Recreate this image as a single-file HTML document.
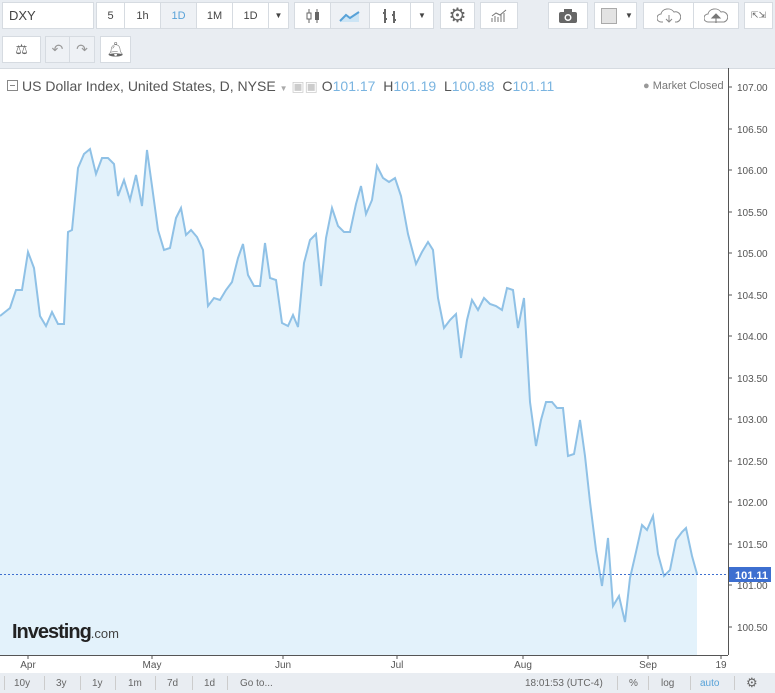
<!DOCTYPE html>
<html><head><meta charset="utf-8"><style>
*{box-sizing:border-box;margin:0;padding:0}
body{width:775px;height:693px;background:#e9edf2;font-family:"Liberation Sans",sans-serif;position:relative;overflow:hidden;color:#555}
.b{position:absolute;background:#fff;border:1px solid #d6dbe1;font-size:11px;display:flex;align-items:center;justify-content:center;color:#444}
.t{position:absolute;font-size:11px;color:#444}
</style></head><body>
<div class="b" style="left:2px;top:2px;width:92px;height:27px;justify-content:flex-start;padding-left:6px;font-size:13px">DXY</div>
<div class="b" style="left:96px;top:2px;width:29px;height:27px">5</div>
<div class="b" style="left:124px;top:2px;width:37px;height:27px">1h</div>
<div class="b" style="left:160px;top:2px;width:37px;height:27px;background:#eef1f5;color:#58a2d8">1D</div>
<div class="b" style="left:196px;top:2px;width:37px;height:27px">1M</div>
<div class="b" style="left:232px;top:2px;width:37px;height:27px">1D</div>
<div class="b" style="left:268px;top:2px;width:21px;height:27px;font-size:8px">▼</div>
<div class="b" style="left:294px;top:2px;width:37px;height:27px"><svg width="16" height="18"><path d="M4 2v14M12 2v14" stroke="#666"/><rect x="2" y="6" width="4" height="6" fill="#fff" stroke="#666"/><rect x="10" y="5" width="4" height="8" fill="#666"/></svg></div>
<div class="b" style="left:330px;top:2px;width:40px;height:27px;background:#eef1f5"><svg width="22" height="14"><path d="M1 12L7 6L11 9L20 3V13H1Z" fill="#cde5f5"/><path d="M1 12L7 6L11 9L20 3" stroke="#58a2d8" stroke-width="2" fill="none"/></svg></div>
<div class="b" style="left:369px;top:2px;width:42px;height:27px"><svg width="20" height="18"><path d="M5 2v14M3 6h2M5 12h2M14 4v12M12 8h2M14 13h2" stroke="#666" stroke-width="2"/></svg></div>
<div class="b" style="left:410px;top:2px;width:24px;height:27px;font-size:8px">▼</div>
<div class="b" style="left:440px;top:2px;width:35px;height:27px;font-size:20px;color:#666">⚙</div>
<div class="b" style="left:480px;top:2px;width:38px;height:27px"><svg width="18" height="14"><path d="M2 13V9M5 13V7M8 13V8M11 13V5M14 13V4M2 7L6 4L10 6L16 1" stroke="#777" fill="none"/></svg></div>
<div class="b" style="left:548px;top:2px;width:40px;height:27px"><svg width="20" height="16"><rect x="1" y="4" width="18" height="11" rx="2" fill="#666"/><rect x="6" y="1" width="8" height="4" fill="#666"/><circle cx="10" cy="9.5" r="3.5" fill="#fff"/><circle cx="10" cy="9.5" r="2" fill="#666"/></svg></div>
<div class="b" style="left:594px;top:2px;width:43px;height:27px;justify-content:flex-start;padding-left:6px"><span style="display:inline-block;width:16px;height:16px;background:#e3e3e3;border:1px solid #aaa"></span><span style="font-size:8px;margin-left:8px">▼</span></div>
<div class="b" style="left:643px;top:2px;width:51px;height:27px"><svg width="24" height="16"><path d="M6 14H4a4 4 0 0 1 0-8a7 6 0 0 1 13-2a5 5 0 0 1 3 10h-2" fill="none" stroke="#888"/><path d="M12 7v7M9 11l3 3 3-3" fill="none" stroke="#888"/></svg></div>
<div class="b" style="left:693px;top:2px;width:46px;height:27px"><svg width="24" height="16"><path d="M4 14a4 4 0 0 1 0-8a7 6 0 0 1 13-2a5 5 0 0 1 3 10Z" fill="none" stroke="#888"/><path d="M12 15V9M8 10l4-4 4 4Z" fill="#777" stroke="#777"/></svg></div>
<div class="b" style="left:744px;top:2px;width:29px;height:27px;font-size:9px;color:#666;line-height:9px;text-align:center">⇱⇲</div>
<div class="b" style="left:2px;top:36px;width:39px;height:27px;font-size:14px;color:#666">⚖</div>
<div class="b" style="left:45px;top:36px;width:25px;height:27px;background:#eef1f5;color:#999;font-size:14px">↶</div>
<div class="b" style="left:69px;top:36px;width:26px;height:27px;background:#eef1f5;color:#999;font-size:14px">↷</div>
<div class="b" style="left:100px;top:36px;width:31px;height:27px;color:#666;font-size:14px">🔔︎</div>

<div style="position:absolute;left:0;top:68px;width:775px;height:605px;background:#fff;border-top:1px solid #d6dbe1"></div>
<svg style="position:absolute;left:0;top:0" width="775" height="693">
<polygon fill="#e3f2fb" points="0,655 0,316 10,308 16,290 22,290 28,252 34,268 40,316 46,326 52,312 58,324 64,324 68,232 72,230 78,168 84,154 90,149 96,174 102,158 108,158 114,164 118,196 124,180 130,200 136,175 142,206 147,150 152,186 158,230 164,250 170,248 176,218 181,208 186,235 191,230 197,237 203,250 208,306 214,298 220,300 226,290 232,282 238,258 243,244 248,275 254,286 260,286 265,243 270,278 276,280 282,323 288,326 293,315 298,327 304,263 310,240 316,234 321,286 326,238 332,208 338,226 344,232 350,232 356,204 361,186 366,214 372,200 377,166 383,178 389,182 395,178 401,196 408,234 416,264 422,252 428,242 433,250 438,298 444,328 450,320 456,314 461,358 467,320 472,300 478,310 484,298 490,304 496,306 502,310 507,288 513,290 518,328 524,298 530,402 536,446 541,420 546,402 552,402 557,408 563,408 568,456 574,454 580,420 585,456 590,502 596,550 602,586 608,538 613,606 619,596 625,622 630,578 636,552 642,525 647,530 653,516 658,554 664,576 670,570 676,540 682,532 686,528 692,556 697,574 697,655"/>
<polyline fill="none" stroke="#8fc1e6" stroke-width="2" points="0,316 10,308 16,290 22,290 28,252 34,268 40,316 46,326 52,312 58,324 64,324 68,232 72,230 78,168 84,154 90,149 96,174 102,158 108,158 114,164 118,196 124,180 130,200 136,175 142,206 147,150 152,186 158,230 164,250 170,248 176,218 181,208 186,235 191,230 197,237 203,250 208,306 214,298 220,300 226,290 232,282 238,258 243,244 248,275 254,286 260,286 265,243 270,278 276,280 282,323 288,326 293,315 298,327 304,263 310,240 316,234 321,286 326,238 332,208 338,226 344,232 350,232 356,204 361,186 366,214 372,200 377,166 383,178 389,182 395,178 401,196 408,234 416,264 422,252 428,242 433,250 438,298 444,328 450,320 456,314 461,358 467,320 472,300 478,310 484,298 490,304 496,306 502,310 507,288 513,290 518,328 524,298 530,402 536,446 541,420 546,402 552,402 557,408 563,408 568,456 574,454 580,420 585,456 590,502 596,550 602,586 608,538 613,606 619,596 625,622 630,578 636,552 642,525 647,530 653,516 658,554 664,576 670,570 676,540 682,532 686,528 692,556 697,574"/>
<line x1="0" y1="574.5" x2="728" y2="574.5" stroke="#3d6fd0" stroke-dasharray="2,2"/>
<line x1="728.5" y1="68" x2="728.5" y2="655" stroke="#555"/>
<line x1="0" y1="655.5" x2="728" y2="655.5" stroke="#555"/>
<g stroke="#555">
<line x1="728" y1="87" x2="732" y2="87"/><line x1="728" y1="129" x2="732" y2="129"/><line x1="728" y1="170" x2="732" y2="170"/><line x1="728" y1="212" x2="732" y2="212"/><line x1="728" y1="253" x2="732" y2="253"/><line x1="728" y1="295" x2="732" y2="295"/><line x1="728" y1="336" x2="732" y2="336"/><line x1="728" y1="378" x2="732" y2="378"/><line x1="728" y1="419" x2="732" y2="419"/><line x1="728" y1="461" x2="732" y2="461"/><line x1="728" y1="502" x2="732" y2="502"/><line x1="728" y1="544" x2="732" y2="544"/><line x1="728" y1="585" x2="732" y2="585"/><line x1="728" y1="627" x2="732" y2="627"/>
<line x1="28" y1="655" x2="28" y2="659"/><line x1="152" y1="655" x2="152" y2="659"/><line x1="283" y1="655" x2="283" y2="659"/><line x1="397" y1="655" x2="397" y2="659"/><line x1="523" y1="655" x2="523" y2="659"/><line x1="648" y1="655" x2="648" y2="659"/><line x1="721" y1="655" x2="721" y2="659"/>
</g>
<g font-family="Liberation Sans" font-size="10" fill="#555">
<text x="737" y="91">107.00</text><text x="737" y="133">106.50</text><text x="737" y="174">106.00</text><text x="737" y="216">105.50</text><text x="737" y="257">105.00</text><text x="737" y="299">104.50</text><text x="737" y="340">104.00</text><text x="737" y="382">103.50</text><text x="737" y="423">103.00</text><text x="737" y="465">102.50</text><text x="737" y="506">102.00</text><text x="737" y="548">101.50</text><text x="737" y="589">101.00</text><text x="737" y="631">100.50</text>
<g text-anchor="middle"><text x="28" y="668">Apr</text><text x="152" y="668">May</text><text x="283" y="668">Jun</text><text x="397" y="668">Jul</text><text x="523" y="668">Aug</text><text x="648" y="668">Sep</text><text x="721" y="668">19</text></g>
</g>
<rect x="729" y="567" width="42" height="15" fill="#3d6fd0"/>
<text x="735" y="579" font-family="Liberation Sans" font-size="11" font-weight="bold" fill="#fff">101.11</text>
</svg>
<div class="t" style="left:7px;top:78px;font-size:14px;color:#555"><span style="display:inline-block;width:11px;height:11px;border:1px solid #888;vertical-align:0px;margin-right:4px;position:relative"><span style="position:absolute;left:2px;top:4px;width:5px;height:1px;background:#888"></span></span>US Dollar Index, United States, D, NYSE <span style="font-size:8px;color:#aaa">▼</span> <span style="color:#ccc">▣▣</span> <span style="font-size:14px">O<span style="color:#7ab4e0">101.17</span> &nbsp;H<span style="color:#7ab4e0">101.19</span> &nbsp;L<span style="color:#7ab4e0">100.88</span> &nbsp;C<span style="color:#7ab4e0">101.11</span></span></div>
<div class="t" style="left:643px;top:80px;color:#777"><span style="color:#999">●</span> Market Closed</div>
<div class="t" style="left:12px;top:621px;font-size:20px;font-weight:bold;color:#222;letter-spacing:-1px">Investing<span style="font-size:13px;font-weight:normal;color:#444;letter-spacing:0">.com</span></div>
<div style="position:absolute;left:0;top:673px;width:775px;height:20px;background:#e9edf2;font-size:10px;color:#666">
<span style="position:absolute;left:14px;top:5px">10y</span><span style="position:absolute;left:56px;top:5px">3y</span><span style="position:absolute;left:92px;top:5px">1y</span><span style="position:absolute;left:128px;top:5px">1m</span><span style="position:absolute;left:167px;top:5px">7d</span><span style="position:absolute;left:204px;top:5px">1d</span><span style="position:absolute;left:240px;top:5px">Go to...</span>
<span style="position:absolute;left:525px;top:5px">18:01:53 (UTC-4)</span><span style="position:absolute;left:629px;top:5px">%</span><span style="position:absolute;left:661px;top:5px">log</span><span style="position:absolute;left:700px;top:5px;color:#58a2d8">auto</span><span style="position:absolute;left:746px;top:2px;font-size:13px">⚙</span>
<span style="position:absolute;left:4px;top:3px;width:1px;height:14px;background:#ccc"></span><span style="position:absolute;left:44px;top:3px;width:1px;height:14px;background:#ccc"></span><span style="position:absolute;left:80px;top:3px;width:1px;height:14px;background:#ccc"></span><span style="position:absolute;left:115px;top:3px;width:1px;height:14px;background:#ccc"></span><span style="position:absolute;left:155px;top:3px;width:1px;height:14px;background:#ccc"></span><span style="position:absolute;left:192px;top:3px;width:1px;height:14px;background:#ccc"></span><span style="position:absolute;left:227px;top:3px;width:1px;height:14px;background:#ccc"></span><span style="position:absolute;left:617px;top:3px;width:1px;height:14px;background:#ccc"></span><span style="position:absolute;left:648px;top:3px;width:1px;height:14px;background:#ccc"></span><span style="position:absolute;left:690px;top:3px;width:1px;height:14px;background:#ccc"></span><span style="position:absolute;left:734px;top:3px;width:1px;height:14px;background:#ccc"></span>
</div>
</body></html>
